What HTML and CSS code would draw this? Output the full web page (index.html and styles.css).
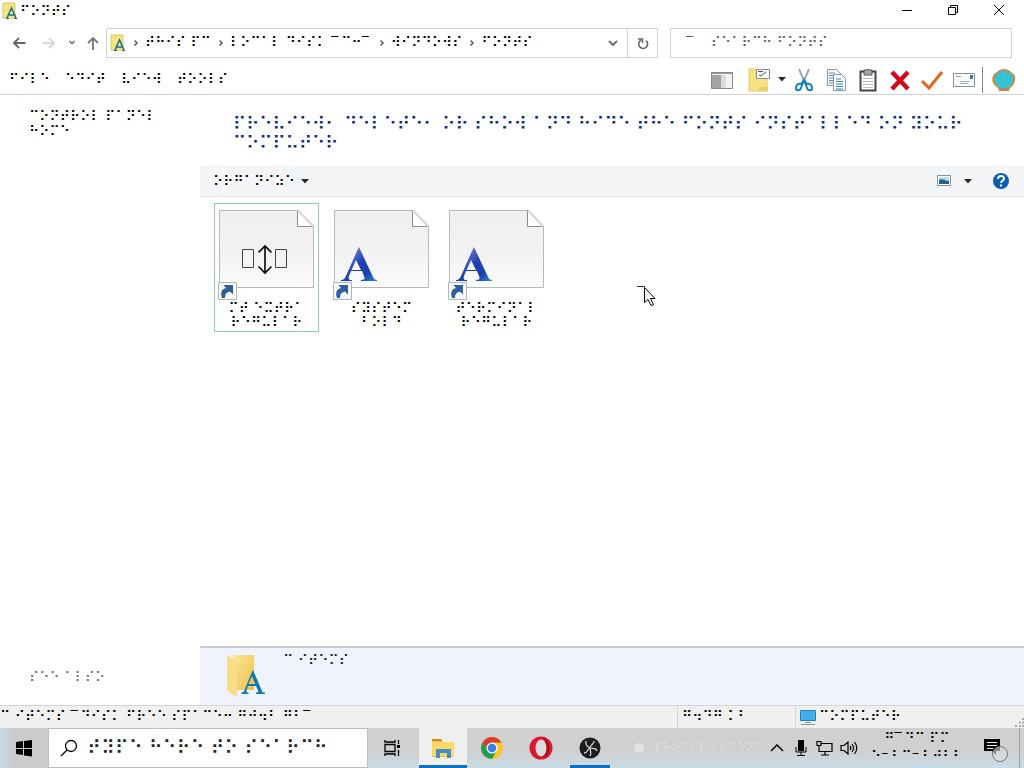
FILE: index.html
```html
<!DOCTYPE html>
<html lang="en">
<head>
<meta charset="utf-8">
<title>⠋⠕⠝⠞⠎</title>
<link rel="stylesheet" href="styles.css">
</head>
<body>
<svg class="defs" aria-hidden="true">
  <defs>
    <linearGradient id="page" x1="0" y1="0" x2="0" y2="1"><stop offset="0" stop-color="#efeff0"/><stop offset=".6" stop-color="#f3f3f3"/><stop offset="1" stop-color="#fbfbfb"/></linearGradient>
    <linearGradient id="ink" x1="0" y1="0" x2="1" y2="1"><stop offset="0" stop-color="#a9a3cc"/><stop offset=".5" stop-color="#1f3fb8"/><stop offset=".75" stop-color="#1b3fae"/><stop offset="1" stop-color="#2b8fd0"/></linearGradient>
    <linearGradient id="gold" x1="0" y1="0" x2="1" y2="1"><stop offset="0" stop-color="#fbe596"/><stop offset="1" stop-color="#ecc14e"/></linearGradient>
    <symbol id="small-folder" viewBox="0 0 16 18">
      <path d="M1 1h12v15H1z" fill="#f6e384" stroke="#dcc56a"/>
      <path d="M5 16 9.500 6 14 16M7 13h5" fill="none" stroke="#1b7387" stroke-width="1.600"/>
      <path d="M4 16.500h3M12 16.500h3" stroke="#1b7387"/>
    </symbol>
    <symbol id="sheet" viewBox="0 0 98 92">
      <path d="M1.500 1.500h78L95.500 18v60.500h-94z" fill="url(#page)" stroke="#b9b9b9"/>
      <path d="M79.500 1.500v16h16z" fill="#fff" stroke="#8c8c8c"/>
      <path d="M80 1.500 95.500 17.500" stroke="#d5d5d5" stroke-width="2"/>
    </symbol>
    <symbol id="shortcut" viewBox="0 0 98 92">
      <path d="M.5 73.500h18v17h-18z" fill="#f6f8fa" stroke="#b5b5b5"/>
      <path d="M4 89c-2-6 0-9 4-10L5.500 76H15v9.500L12 82.500c-4 1-5 3-5 6.500z" fill="#2d5f9e"/>
    </symbol>
    <symbol id="letter" viewBox="0 0 98 92">
      <path d="m26 38 14 30c1 2 2 3 4 3v1H28v-1c4 0 4-1 3-4l-2-5H18l-2 5c-1 3 0 4 3 4v1H8v-1c3 0 4-2 5-4l11-25zm-3 13-4.500 10H28z" fill="url(#ink)"/>
    </symbol>
    <symbol id="chev" viewBox="0 0 8 10"><path d="M2.500 2.500 5 5 2.500 7.500" fill="none" stroke="#666" stroke-width="1.700"/></symbol>
    <symbol id="caret" viewBox="0 0 8 5"><path d="M0 0h8L4 4.500z" fill="#2b2b2b"/></symbol>
  </defs>
</svg>

<div class="window">
  <header class="titlebar">
    <svg class="i-folder"><use href="#small-folder"/></svg>
    <h1 class="caption">⠋⠕⠝⠞⠎</h1>
    <div class="controls">
      <button aria-label="Minimize"><svg width="12" height="12"><path d="M1 6.500h10" stroke="#000"/></svg></button>
      <button aria-label="Restore"><svg width="12" height="12" fill="none" stroke="#000"><path d="M1.500 3.500h7v7h-7zM3.500 3.500v-2h7v7h-2"/></svg></button>
      <button aria-label="Close"><svg width="12" height="12" stroke="#000"><path d="m1 1 10 10M11 1 1 11"/></svg></button>
    </div>
  </header>

  <div class="navbar">
    <div class="arrows">
      <button aria-label="Back"><svg width="14" height="14" fill="none" stroke="#666" stroke-width="1.800"><path d="M13.500 7H2M7 2 2 7l5 5"/></svg></button>
      <button aria-label="Forward"><svg width="14" height="14" fill="none" stroke="#d8d8d8" stroke-width="1.800"><path d="M.5 7H12M7 2l5 5-5 5"/></svg></button>
      <button aria-label="Recent" class="slim"><svg width="8" height="8" fill="none" stroke="#777" stroke-width="1.600"><path d="m1.500 2 2.500 2.500L6.500 2"/></svg></button>
      <button aria-label="Up" class="mid"><svg width="14" height="14" fill="none" stroke="#777" stroke-width="1.800"><path d="M7 14V2M2 7l5-5 5 5"/></svg></button>
    </div>
    <nav class="address">
      <svg class="i-folder"><use href="#small-folder"/></svg>
      <svg class="chev"><use href="#chev"/></svg>
      <a href="#pc">⠞⠓⠊⠎ ⠏⠉</a>
      <svg class="chev"><use href="#chev"/></svg>
      <a href="#disk">⠇⠕⠉⠁⠇ ⠙⠊⠎⠅ <span class="bar">‾</span>⠉⠒<span class="bar">‾</span></a>
      <svg class="chev"><use href="#chev"/></svg>
      <a href="#windows">⠺⠊⠝⠙⠕⠺⠎</a>
      <svg class="chev"><use href="#chev"/></svg>
      <a href="#fonts">⠋⠕⠝⠞⠎</a>
      <button class="drop" aria-label="History"><svg width="10" height="8" fill="none" stroke="#666" stroke-width="1.800"><path d="m1 2 4 4 4-4"/></svg></button>
      <button class="refresh" aria-label="Refresh"><svg width="12" height="14" fill="none" stroke="#666" stroke-width="1.600"><path d="M9 4.500A4.500 4.500 0 1 1 4 4M1 3h4.500v4"/></svg></button>
    </nav>
    <input class="search" type="search" aria-label="Search fonts" placeholder="‾    ⠎⠑⠁⠗⠉⠓ ⠋⠕⠝⠞⠎">
  </div>

  <div class="menubar">
    <div class="menus">
      <button>⠋⠊⠇⠑</button><button>⠑⠙⠊⠞</button><button>⠧⠊⠑⠺</button><button>⠞⠕⠕⠇⠎</button>
    </div>
    <div class="tools">
      <button aria-label="Preview pane"><svg width="24" height="24"><path d="M1.500 4.500h21v16h-21z" fill="#f2f2f2" stroke="#888"/><path d="M2 7h9v13H2z" fill="#a3a3a3"/><path d="M2 5.500h20" stroke="#9c9c9c"/><path d="M11 7h5v13h-5z" fill="#dcdcdc"/></svg></button>
      <button class="folder-tool" aria-label="New folder"><svg width="24" height="24"><path d="M2 1h7v9h11v13H2z" fill="#f8e084" stroke="#e5c765"/><path d="M9.500 1.500h13v9h-13z" fill="#f6f8fc" stroke="#8290a5"/><path d="M11 3.500h5M12 7l2 1 5-4" fill="none" stroke="#555"/><path d="M12 19h9v4h-9z" fill="#efcb59"/></svg></button>
      <button class="slim" aria-label="More"><svg width="8" height="5"><use href="#caret"/></svg></button>
      <button aria-label="Cut"><svg width="24" height="24" fill="none"><path d="m7 1 6 14M17 1l-6 14" stroke="#9ea9af" stroke-width="2"/><path d="m12 12-3 4c-3-1-5 1-5 4s4 3 5 0l3-8 3 8c1 3 5 3 5 0s-2-5-5-4z" stroke="#1682bd" stroke-width="2"/></svg></button>
      <button aria-label="Copy"><svg width="24" height="24" fill="#fafcfe" stroke="#7f9bb0"><path d="M3.500 1.500h9l4 4v12h-13z"/><path d="M5 5h6M5 7.500h7M5 10h6M5 12.500h6M5 15h6" stroke="#4e8dbb"/><path d="M9.500 6.500h8l4 4v12h-12z"/><path d="M12 11h5M12 13.500h7M12 16h7M12 18.500h7M12 21h7" stroke="#3c83b9"/></svg></button>
      <button aria-label="Paste"><svg width="24" height="24"><path d="M4.500 3.500h15v19h-15z" fill="#fff" stroke="#444" stroke-width="2"/><path d="M8 2h3l1-1 1 1h3v5H8z" fill="#a5a5a5" stroke="#555"/><path d="M7 10.500h10M7 13.500h10M7 16.500h10M7 19.500h10" stroke="#b7bec3"/></svg></button>
      <button aria-label="Delete"><svg width="24" height="24"><path d="m4 4 16 17M20 4 4 21" stroke="#d5081c" stroke-width="4.500"/></svg></button>
      <button aria-label="Properties"><svg width="24" height="24"><path d="m2 13 7 7L22 4" fill="none" stroke="#e2661c" stroke-width="3"/></svg></button>
      <button aria-label="E-mail"><svg width="24" height="24"><path d="M1.500 5.500h21v13h-21z" fill="#f8fafb" stroke="#87929c"/><path d="M4 8.500h5M8 13.500h9M8 15.500h8" stroke="#9da9b3"/><path d="M18 7h3v4h-3z" fill="#3478a8"/></svg></button>
      <span class="rule"></span>
      <button class="shell" aria-label="Shell"><svg width="26" height="26"><path d="M7 21C2 18 0 13 2 9c1-3 3-3 4-4 3-4 11-4 14 0 2 1 4 3 4 5 1 5-2 9-5 11l-1 3H8z" fill="#c98d50"/><path d="M8 20C3 16 2 11 6 7c4-4 10-4 14 0s2 9-2 13c-3 3-7 3-10 0z" fill="#30c1d2"/><path d="M13 22V4M11 21 7 6M15 21l4-15M9 20 4 11M17 20l5-9" stroke="#45c9d4"/><path d="M8 21h10l-1 3H9z" fill="#b98856"/></svg></button>
    </div>
  </div>

  <div class="body">
    <aside class="side">
      <a href="#home">⠉⠕⠝⠞⠗⠕⠇ ⠏⠁⠝⠑⠇<br>⠓⠕⠍⠑</a>
      <p class="see">⠎⠑⠑ ⠁⠇⠎⠕</p>
    </aside>
    <main class="main">
      <h2 class="heading">⠏⠗⠑⠧⠊⠑⠺⠂ ⠙⠑⠇⠑⠞⠑⠂ ⠕⠗ ⠎⠓⠕⠺ ⠁⠝⠙ ⠓⠊⠙⠑ ⠞⠓⠑ ⠋⠕⠝⠞⠎ ⠊⠝⠎⠞⠁⠇⠇⠑⠙ ⠕⠝ ⠽⠕⠥⠗ ⠉⠕⠍⠏⠥⠞⠑⠗</h2>
      <div class="commands">
        <button class="organize">⠕⠗⠛⠁⠝⠊⠵⠑ <svg width="8" height="5"><use href="#caret"/></svg></button>
        <div class="views">
          <button aria-label="Change view"><svg width="14" height="12"><path d="M.5.5h13v10H.5z" fill="#fff" stroke="#7d91a6"/><path d="M2 2h10v7H2z" fill="#bcd9ee"/><path d="M2 5c4-2 5 1 10 1v3H2z" fill="#24618d"/></svg></button>
          <button aria-label="View options"><svg width="8" height="5"><use href="#caret"/></svg></button>
          <button class="help" aria-label="Help"><svg width="18" height="18"><circle cx="9" cy="9" r="8" fill="#0b5cb5"/><path d="M6 7c0-4 6-4 6-.500C12 9 9 8.500 9 11M9 12.500v2" fill="none" stroke="#fff" stroke-width="2"/></svg></button>
        </div>
      </div>
      <div class="files">
        <button class="file selected">
          <svg width="98" height="92"><use href="#sheet"/><path d="M24.500 40.500h11v18h-11zM57.500 40.500h11v18h-11z" fill="none" stroke="#444"/><path d="M47 37v27M40.500 43.500 47 37l6.500 6.500M40.500 57.500 47 64l6.500-6.500" fill="none" stroke="#000" stroke-width="1.600"/><use href="#shortcut"/></svg>
          <span>⠍⠞ ⠑⠭⠞⠗⠁<br>⠗⠑⠛⠥⠇⠁⠗</span>
        </button>
        <button class="file">
          <svg width="98" height="92"><use href="#sheet"/><use href="#letter"/><use href="#shortcut"/></svg>
          <span>⠎⠽⠎⠞⠑⠍<br>⠃⠕⠇⠙</span>
        </button>
        <button class="file">
          <svg width="98" height="92"><use href="#sheet"/><use href="#letter"/><use href="#shortcut"/></svg>
          <span>⠞⠑⠗⠍⠊⠝⠁⠇<br>⠗⠑⠛⠥⠇⠁⠗</span>
        </button>
      </div>
      <section class="details">
        <svg width="42" height="46"><path d="M8 3h21v35H8z" fill="url(#gold)"/><path d="m2 3 10 6v36L2 39z" fill="#f8dc88"/><path d="m28 18 9 21c.500 1 1 1.500 3 1.500V42h-9v-1.500c2 0 2.500-.500 2-2L31 34h-8l-1.500 4c-.500 2 0 2.500 2 2.500V42h-7v-1.500c2 0 2.500-1 3-2.500l7-17zm-1 6-3.500 8H30z" fill="#1279ae"/></svg>
        <p>⠉ ⠊⠞⠑⠍⠎</p>
      </section>
    </main>
  </div>

  <footer class="status">
    <span class="count">⠉ ⠊⠞⠑⠍⠎ <span class="bar">‾</span>⠙⠊⠎⠅ ⠋⠗⠑⠑ ⠎⠏⠁⠉⠑⠒ ⠛⠚⠲⠃ ⠛⠃<span class="bar">‾</span></span>
    <span class="size">⠛⠲⠙⠛ ⠅⠃</span>
    <span class="zone"><svg width="18" height="16"><path d="M1.500 1.500h15v10h-15z" fill="#42aff0" stroke="#2483bd"/><path d="M6 13.500h6M2 15.500h14" stroke="#8a98a3"/></svg>⠉⠕⠍⠏⠥⠞⠑⠗
      <svg class="grip" width="10" height="10"><path d="M8 1h2M5 4.500h2M8 4.500h2M1 8h2M5 8h2M8 8h2" stroke="#aaa" stroke-width="2"/></svg></span>
  </footer>
</div>

<div class="taskbar">
  <button class="start" aria-label="Start"><svg width="18" height="18"><path d="m1 3 7-1v7H1zM9 2l8-1v8H9zM1 10h7v6l-7-1zM9 10h8v7.500L9 16.500z"/></svg></button>
  <label class="find"><svg width="18" height="18" fill="none" stroke="#000" stroke-width="1.300"><circle cx="11" cy="7" r="5.500"/><path d="m7 11-6 6"/></svg><input type="text" aria-label="Search" placeholder="⠞⠽⠏⠑ ⠓⠑⠗⠑ ⠞⠕ ⠎⠑⠁⠗⠉⠓"></label>
  <button class="view" aria-label="Task view"><svg width="18" height="18" fill="none" stroke="#000" stroke-width="1.300"><path d="M1 5.500h10v7H1zM1 1v2h10V1M1 17v-2h10v2M14.500 1v4M14.500 11v6"/><path d="M14.500 6v3" stroke-width="3"/></svg></button>
  <button class="app current" aria-label="File Explorer"><svg width="26" height="24"><path d="M2 3h9l2 3h10v15H2z" fill="#efbd43"/><path d="M2 6h22v14H2z" fill="#ffd765"/><path d="M2 3h9l1 2H2z" fill="#c9921d"/><path d="M6 22v-9h15v9h-4v-5h-7v5z" fill="#3d8ecb"/></svg></button>
  <button class="app" aria-label="Chrome"><svg width="24" height="24"><circle cx="12" cy="12" r="11" fill="#f7c72a"/><path d="M2.500 6.500A11 11 0 0 1 21.500 6.500H12l-4.500 8z" fill="#dd3b2e"/><path d="M2.500 6.500A11 11 0 0 0 12 23l4.500-8.500h-9z" fill="#1f9d50"/><circle cx="12" cy="12" r="5.500" fill="#fff"/><circle cx="12" cy="12" r="4.300" fill="#3b7de8"/></svg></button>
  <button class="app" aria-label="Opera"><svg width="24" height="24"><circle cx="12" cy="12" r="11.500" fill="#dc1730"/><ellipse cx="12" cy="12" rx="5.500" ry="8.500" fill="#dcdcdc"/><path d="M14 2c9 3 9 17 0 20 5-5 5-15 0-20z" fill="#a5101f"/></svg></button>
  <button class="app running" aria-label="OBS"><svg width="24" height="24" fill="none"><circle cx="12" cy="12" r="10.500" fill="#1d1d1f"/><path d="M8 5c-1 5 2 6 4 7 3 1 6-1 7 3M12 12c0-3 4-3 4-7M12 12c-3 1-2 5-6 5M12 12c0 3 2 5 0 8" stroke="#d6d6d6" stroke-width="1.300"/></svg></button>
  <span class="ghost"><svg width="10" height="10"><circle cx="5" cy="5" r="5" fill="#e2e2e2"/></svg>⠏⠗⠕⠋⠊⠇⠑ ⠎⠉⠑⠝⠑</span>
  <div class="tray">
    <button aria-label="Show hidden icons"><svg width="14" height="16" fill="none" stroke="#111" stroke-width="1.600"><path d="m1 11 6-6 6 6"/></svg></button>
    <button aria-label="Microphone"><svg width="14" height="16"><path d="M4 0h6v11H4z"/><path d="M2 7v5h10V7M7 12v3M3 15.500h8" fill="none" stroke="#000"/></svg></button>
    <button aria-label="Network"><svg width="18" height="16" fill="none" stroke="#000" stroke-width="1.200"><path d="M5 3.500h11v8H3V7M9 12v3M5 15h8M1 1.500h4v4H1zM3 5.500V8"/></svg></button>
    <button aria-label="Volume"><svg width="18" height="16" fill="none" stroke="#000" stroke-width="1.200"><path d="M1 5.500h3L8 2v12l-4-3.500H1zM10 6q1.500 2 0 4M12 4q3 4 0 8M14.500 2q4.500 6 0 12"/></svg></button>
  </div>
  <div class="clock"><time>⠛<span class="bar">‾</span>⠙⠉ ⠏⠍</time><time>⠢<span class="bar">–</span>⠆⠒<span class="bar">–</span>⠆⠴⠆⠆</time></div>
  <button class="notes" aria-label="Notifications"><svg width="28" height="28"><path d="M2 5h16v12h-4v4l-4-4H2z"/><path d="M5 8.500h10M5 11.500h10M5 14.500h6" stroke="#eee"/><circle cx="18" cy="20" r="7.500" fill="#d8dde2" fill-opacity=".6" stroke="#777"/></svg></button>
  <span class="peek"></span>
</div>

<svg class="pointer" width="20" height="22" aria-hidden="true"><path d="M7.500 2.500v15l3.500-3 3 6 2.500-1-3-6h4.500z" fill="#fff" stroke="#000"/><path d="M0 1.500h8" stroke="#333"/></svg>
</body>
</html>
```
FILE: styles.css
```css
* { box-sizing: border-box; }

body {
  display: flex;
  flex-direction: column;
  min-height: 100vh;
  margin: 0;
  background: #fff;
  color: #000;
  font: 14px/15px "DejaVu Sans", sans-serif;
}

h1, h2, p { margin: 0; font-weight: normal; }
a { color: inherit; text-decoration: none; }
svg { display: block; flex: none; }

button {
  display: flex;
  align-items: center;
  justify-content: center;
  padding: 0;
  border: 0;
  background: none;
  color: inherit;
  font: inherit;
}

input { font: inherit; }

.defs { position: absolute; width: 0; height: 0; }
.bar { display: inline-block; width: 10px; }
.i-folder { width: 16px; height: 18px; }

.window { display: flex; flex: 1; flex-direction: column; }

.titlebar { display: flex; gap: 2px; height: 28px; padding: 2px 2px 0; }
.caption { flex: 1; padding-top: 2px; font-size: 14px; line-height: 15px; }
.controls { display: flex; align-items: flex-start; }
.controls button { width: 46px; height: 16px; }

.navbar { display: flex; height: 30px; }
.arrows { display: flex; flex: none; width: 106px; padding-left: 4px; }
.arrows button { width: 30px; }
.arrows .slim { width: 16px; }
.arrows .mid { width: 26px; }

.address {
  display: flex;
  flex: 1 1 552px;
  align-items: center;
  margin-right: 12px;
  padding-left: 3px;
  border: 1px solid #d4d4d4;
}
.address a { padding-bottom: 2px; white-space: nowrap; }
.chev { width: 8px; height: 10px; margin: 0 5px 0 6px; }
.drop { width: 28px; height: 28px; margin-left: auto; }
.refresh { width: 30px; height: 28px; border-left: 1px solid #d4d4d4; }

.search {
  flex: 1 1 342px;
  min-width: 0;
  margin-right: 12px;
  padding: 0 15px 2px;
  border: 1px solid #d4d4d4;
  border-radius: 0;
  appearance: none;
  background: #fff;
}
.search::placeholder { color: #666; opacity: 1; }

.menubar {
  display: flex;
  justify-content: space-between;
  height: 37px;
  border-bottom: 1px solid #d0d0d0;
}
.menus { display: flex; gap: 15px; padding: 7px 0 0 9px; align-items: center; }
.tools { display: flex; align-items: center; padding: 7px 4px 0 0; }
.tools button { width: 32px; }
.tools .folder-tool { margin-left: 5px; }
.tools .slim { width: 13px; }
.rule { width: 1px; height: 26px; margin: 0 5px 0 2px; background: #888; }

.body { display: flex; flex: 1; }
.side {
  display: flex;
  flex: none;
  flex-direction: column;
  justify-content: space-between;
  width: 200px;
  padding: 14px 10px 20px 29px;
}
.see { color: #777; }

.main { display: flex; flex: 1; flex-direction: column; min-width: 0; }
.heading {
  padding: 19px 60px 14px 33px;
  color: #0a2a85;
  font-size: 18px;
  line-height: 19px;
}
.commands {
  display: flex;
  justify-content: space-between;
  height: 31px;
  border-bottom: 1px solid #e4e7ea;
  background: #f3f5f7;
}
.organize { gap: 6px; padding-left: 13px; }
.views { display: flex; gap: 2px; padding-right: 12px; }
.views button { width: 22px; }
.views .help { margin-left: 9px; }

.files {
  display: flex;
  flex: 1;
  flex-wrap: wrap;
  align-content: flex-start;
  gap: 10px;
  padding: 6px 14px;
}
.file {
  flex-direction: column;
  align-items: stretch;
  justify-content: flex-start;
  width: 105px;
  height: 129px;
  padding: 5px 3px 0;
  border: 1px solid transparent;
}
.file.selected { border-color: #92c5d4; }
.file span { line-height: 14px; }

.details {
  display: flex;
  gap: 16px;
  height: 59px;
  padding: 4px 25px;
  border-top: 2px solid #c5cbd2;
  background: #f0f3fd;
  color: #12264a;
}
.details p { padding-top: 1px; }

.status {
  display: flex;
  height: 23px;
  border-top: 1px solid #d2d4d8;
  background: #f0f0f0;
}
.status > span { padding-top: 3px; white-space: nowrap; }
.count { flex: 1; }
.size { width: 118px; padding-left: 4px; border-left: 1px solid #d7d7d7; }
.zone { display: flex; gap: 2px; width: 229px; padding-left: 3px; border-left: 1px solid #d7d7d7; }
.grip { align-self: flex-end; margin-left: auto; }

.taskbar {
  display: flex;
  height: 40px;
  background: linear-gradient(#d0d0d0 0 60%, #c9dce6);
}
.start { flex: none; width: 48px; background: linear-gradient(90deg, #c5dce7, #cbcbcb 30%); }
.find {
  display: flex;
  flex: none;
  align-items: center;
  gap: 9px;
  width: 320px;
  padding-left: 11px;
  border: 1px solid #bfbfbf;
  background: #fff;
}
.find input {
  flex: 1;
  min-width: 0;
  padding: 0 0 2px;
  border: 0;
  background: none;
  font-size: 19px;
}
.find input::placeholder { color: #222; opacity: 1; }
.view { flex: none; width: 51px; padding-right: 1px; }
.app { flex: none; width: 48px; margin-right: 1px; }
.current { border-bottom: 3px solid #0f6fc0; background: #efefef; padding-top: 3px; }
.running {
  background: linear-gradient(#0f6fc0, #0f6fc0) center bottom / 40px 3px no-repeat;
}
.ghost {
  display: flex;
  flex: 1;
  align-items: center;
  gap: 10px;
  min-width: 0;
  padding-left: 19px;
  color: #e2e2e2;
  font-size: 12px;
  white-space: nowrap;
}
.tray { display: flex; }
.tray button { width: 24px; }
.clock {
  display: flex;
  flex: none;
  flex-direction: column;
  align-items: center;
  width: 112px;
  padding-top: 3px;
}
.clock time { line-height: 14px; }
.notes { flex: none; width: 46px; }
.peek { width: 5px; border-left: 1px solid #9aa5ab; }

.pointer { position: absolute; top: 285px; left: 637px; }
```
